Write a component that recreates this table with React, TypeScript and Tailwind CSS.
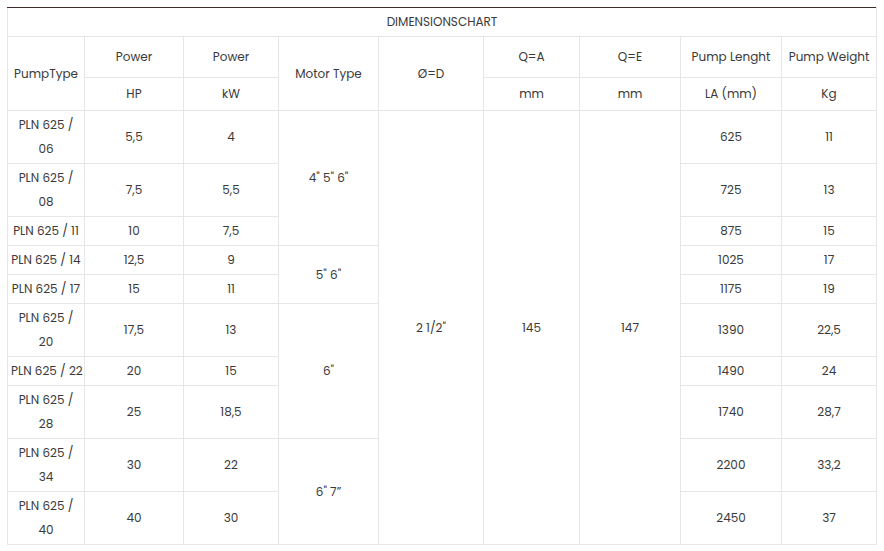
import React from "react";

interface Row {
  type: React.ReactNode;
  hp: string;
  kw: string;
  length: string;
  weight: string;
}

const ROWS: Row[] = [
  { type: <>PLN 625 /<br />06</>, hp: "5,5", kw: "4", length: "625", weight: "11" },
  { type: <>PLN 625 /<br />08</>, hp: "7,5", kw: "5,5", length: "725", weight: "13" },
  { type: "PLN 625 / 11", hp: "10", kw: "7,5", length: "875", weight: "15" },
  { type: "PLN 625 / 14", hp: "12,5", kw: "9", length: "1025", weight: "17" },
  { type: "PLN 625 / 17", hp: "15", kw: "11", length: "1175", weight: "19" },
  { type: <>PLN 625 /<br />20</>, hp: "17,5", kw: "13", length: "1390", weight: "22,5" },
  { type: "PLN 625 / 22", hp: "20", kw: "15", length: "1490", weight: "24" },
  { type: <>PLN 625 /<br />28</>, hp: "25", kw: "18,5", length: "1740", weight: "28,7" },
  { type: <>PLN 625 /<br />34</>, hp: "30", kw: "22", length: "2200", weight: "33,2" },
  { type: <>PLN 625 /<br />40</>, hp: "40", kw: "30", length: "2450", weight: "37" },
];

// motor type cells span several rows
const MOTOR: Record<number, { label: string; span: number }> = {
  0: { label: "4\" 5\" 6\"", span: 3 },
  3: { label: "5\" 6\"", span: 2 },
  5: { label: "6\"", span: 3 },
  8: { label: "6\" 7\u201d", span: 2 },
};

const cell = "border border-[#e6e6e6] px-[3px] py-[2px] text-center align-middle";

export default function App() {
  return (
    <div
      className="min-h-[551px] bg-white pt-[7px] pl-[7px] text-[12px] leading-[24px] text-[#3a3a3a]"
      style={{ fontFamily: "Poppins, Inter, 'Noto Sans', sans-serif" }}
    >
      <table className="w-[869px] table-fixed border-collapse border-t border-t-[#3d2c29]">
        <colgroup>
          <col className="w-[77px]" />
          <col className="w-[99px]" />
          <col className="w-[95px]" />
          <col className="w-[100px]" />
          <col className="w-[105px]" />
          <col className="w-[96px]" />
          <col className="w-[101px]" />
          <col className="w-[101px]" />
          <col className="w-[95px]" />
        </colgroup>
        <tbody>
          <tr className="h-[29px]">
            <td colSpan={9} className={`${cell} border-t-[#3d2c29]`}>
              DIMENSIONSCHART
            </td>
          </tr>
          <tr className="h-[41px]">
            <td rowSpan={2} className={cell}>PumpType</td>
            <td className={cell}>Power</td>
            <td className={cell}>Power</td>
            <td rowSpan={2} className={cell}>Motor Type</td>
            <td rowSpan={2} className={cell}>Ø=D</td>
            <td className={cell}>Q=A</td>
            <td className={cell}>Q=E</td>
            <td className={cell}>Pump Lenght</td>
            <td className={`${cell} whitespace-nowrap`}>Pump Weight</td>
          </tr>
          <tr className="h-[33px]">
            <td className={cell}>HP</td>
            <td className={cell}>kW</td>
            <td className={cell}>mm</td>
            <td className={cell}>mm</td>
            <td className={cell}>LA (mm)</td>
            <td className={cell}>Kg</td>
          </tr>
          {ROWS.map((row, i) => (
            <tr key={i}>
              <td className={`${cell} whitespace-nowrap`}>{row.type}</td>
              <td className={cell}>{row.hp}</td>
              <td className={cell}>{row.kw}</td>
              {MOTOR[i] && (
                <td rowSpan={MOTOR[i].span} className={cell}>
                  {MOTOR[i].label}
                </td>
              )}
              {i === 0 && (
                <>
                  <td rowSpan={10} className={cell}>2 1/2"</td>
                  <td rowSpan={10} className={cell}>145</td>
                  <td rowSpan={10} className={cell}>147</td>
                </>
              )}
              <td className={cell}>{row.length}</td>
              <td className={cell}>{row.weight}</td>
            </tr>
          ))}
        </tbody>
      </table>
    </div>
  );
}
